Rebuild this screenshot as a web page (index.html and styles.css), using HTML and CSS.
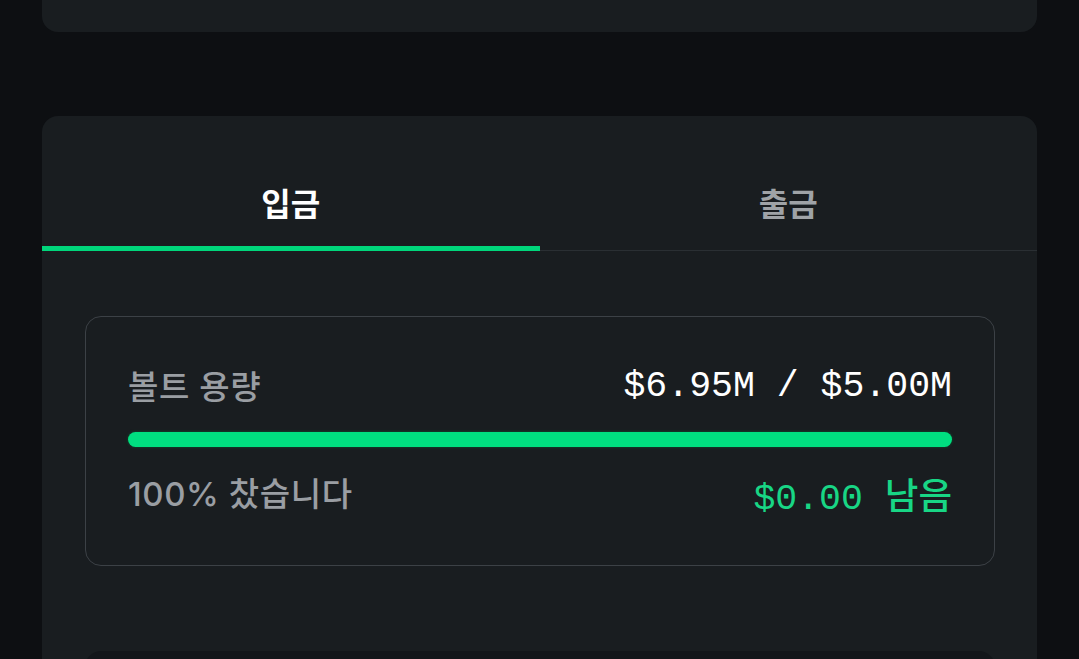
FILE: index.html
```html
<!DOCTYPE html>
<html lang="ko">
<head>
<meta charset="utf-8">
<title>Vault</title>
<link rel="stylesheet" href="styles.css">
</head>
<body>
  <div class="page">
    <div class="card card-top"></div>
    <section class="card card-main">
      <div class="tabs">
        <div class="tab active">입금</div>
        <div class="tab">출금</div>
      </div>
      <div class="card-body">
        <div class="capacity">
          <div class="row">
            <span class="label">볼트 용량</span>
            <span class="value">$6.95M / $5.00M</span>
          </div>
          <div class="bar"><div class="bar-fill" style="width:100%"></div></div>
          <div class="row">
            <span class="label">100% 찼습니다</span>
            <span class="value green">$0.00 남음</span>
          </div>
        </div>
        <div class="next-box"></div>
      </div>
    </section>
  </div>
</body>
</html>
```

FILE: styles.css
```css
* { box-sizing: border-box; }
html, body {
  margin: 0;
  padding: 0;
  background: #0d0f12;
  overflow: hidden;
}
body {
  font-family: "Inter", "Noto Sans CJK KR", sans-serif;
  color: #ffffff;
}
.page {
  width: 1079px;
  height: 659px;
  padding: 0 42px 0 42px;
  display: flex;
  flex-direction: column;
  gap: 84px;
}
.card {
  background: #191d20;
  border-radius: 16px;
}
.card-top {
  height: 32px;
  flex: none;
  border-radius: 0 0 16px 16px;
}
.card-main {
  flex: none;
  border-radius: 16px 16px 0 0;
}
.tabs {
  display: flex;
  border-bottom: 1px solid #2a2f33;
}
.tab {
  flex: 1;
  text-align: center;
  font-family: "Noto Sans CJK KR", sans-serif;
  font-weight: 700;
  font-size: 32px;
  line-height: 40px;
  padding: 66px 0 24px;
  color: #9fa3a7;
  border-bottom: 5px solid transparent;
  margin-bottom: -1px;
}
.tab.active {
  color: #ffffff;
  border-bottom-color: #00d67b;
}
.card-body {
  padding: 65px 42px 0 43px;
  display: flex;
  flex-direction: column;
  gap: 85px;
}
.capacity {
  border: 1px solid #3c4146;
  border-radius: 16px;
  padding: 48px 42px 53px 42px;
  display: flex;
  flex-direction: column;
}
.row {
  display: flex;
  justify-content: space-between;
  align-items: center;
  height: 40px;
}
.label {
  font-family: "Inter", "Noto Sans CJK KR", sans-serif;
  font-size: 33px;
  font-weight: 500;
  color: #9a9ea3;
  letter-spacing: 0.6px;
}
.value {
  font-family: "Liberation Mono", "Noto Sans CJK KR", monospace;
  font-size: 36.5px;
  font-weight: 500;
  color: #ffffff;
  padding-top: 3px;
}
.value.green {
  color: #18d685;
}
.bar {
  height: 15px;
  margin: 27px 0 25px;
  border-radius: 8px;
  background: #0f3a27;
  box-shadow: 0 0 3px rgba(0, 120, 60, 0.6);
}
.bar-fill {
  height: 100%;
  border-radius: 8px;
  background: #00df80;
}
.next-box {
  height: 60px;
  background: #13161a;
  border-radius: 16px 16px 0 0;
}
```
